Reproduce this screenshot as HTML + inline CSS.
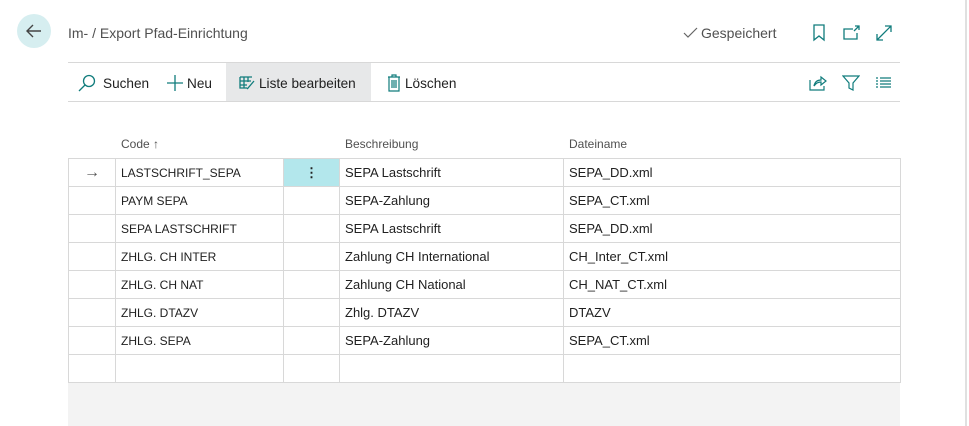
<!DOCTYPE html><html><head><style>
body{margin:0;width:969px;height:426px;background:#fff;font-family:"Liberation Sans",sans-serif;position:relative;overflow:hidden;color:#212121}
.a{position:absolute}
.t{font-size:13.6px}
table{border-collapse:collapse;position:absolute;left:68px;top:158px;font-size:13px}
td{border:1px solid #d8d8d8;height:28px;padding:0 0 0 5px;box-sizing:border-box}
</style></head><body>
<div class="a" style="left:17px;top:14px;width:34px;height:34px;border-radius:50%;background:#d6eef0"></div>
<svg class="a" style="left:24px;top:21px" width="20" height="20"><path d="M17 10H3M9 4L3 10L9 16" stroke="#444" stroke-width="1.4" fill="none"/></svg>
<div class="a" style="left:68px;top:25px;color:#505050;font-size:14px">Im- / Export Pfad-Einrichtung</div>
<svg class="a" style="left:683px;top:26px" width="16" height="14"><path d="M1 7L5 11L14 2" stroke="#666" stroke-width="1.2" fill="none"/></svg>
<div class="a" style="left:701px;top:25px;color:#505050;font-size:14px">Gespeichert</div>
<svg class="a" style="left:812px;top:24px" width="16" height="18" fill="none" stroke="#107c7c" stroke-width="1.3"><path d="M2 1H12V16L7 12L2 16Z"/></svg>
<svg class="a" style="left:843px;top:24px" width="18" height="18" fill="none" stroke="#107c7c" stroke-width="1.3"><path d="M10 5H1V15H14V9M12 2H16V6M16 2L11 7"/></svg>
<svg class="a" style="left:875px;top:24px" width="18" height="18" fill="none" stroke="#107c7c" stroke-width="1.3"><path d="M2 16L16 2M10 2H16V8M2 10V16H8"/></svg>
<div class="a" style="left:68px;top:62px;width:832px;height:1px;background:#d8d8d8"></div>
<div class="a" style="left:68px;top:101px;width:832px;height:1px;background:#d8d8d8"></div>
<div class="a" style="left:226px;top:63px;width:145px;height:38px;background:#e7e8e9"></div>
<svg class="a" style="left:78px;top:74px" width="18" height="18" fill="none" stroke="#107c7c" stroke-width="1.3"><circle cx="11" cy="7" r="5.5"/><path d="M7 11L1 17"/></svg>
<div class="a t" style="left:103px;top:76px">Suchen</div>
<svg class="a" style="left:166px;top:74px" width="18" height="18" stroke="#107c7c" stroke-width="1.3"><path d="M9 1V17M1 9H17"/></svg>
<div class="a t" style="left:187px;top:76px">Neu</div>
<svg class="a" style="left:239px;top:75px" width="16" height="15" fill="none" stroke="#107c7c" stroke-width="1.3"><path d="M1 2H13M1 2V13H8M1 6H12M1 10H8M5 2V13M9 2V7M15 6L9 13L8 14"/></svg>
<div class="a t" style="left:259px;top:76px">Liste bearbeiten</div>
<svg class="a" style="left:387px;top:74px" width="14" height="18" fill="none" stroke="#107c7c" stroke-width="1.2"><path d="M1 3H13M5 3V1H9V3M2 3V17H12V3M5 6V14M7 6V14M9 6V14"/></svg>
<div class="a t" style="left:405px;top:76px">Löschen</div>
<svg class="a" style="left:809px;top:74px" width="18" height="18" fill="none" stroke="#107c7c" stroke-width="1.2"><path d="M1 6V16H15V12M5 12C6 7 9 6 12 6V3L17 7L12 11V8C9 8 7 9 5 12Z"/></svg>
<svg class="a" style="left:842px;top:74px" width="18" height="18" fill="none" stroke="#107c7c" stroke-width="1.2"><path d="M1 2H17L11 9V16L7 14V9Z"/></svg>
<svg class="a" style="left:875px;top:76px" width="16" height="14" stroke="#107c7c" stroke-width="1.2"><path d="M1 2H3M5 2H16M1 5H3M5 5H16M1 8H3M5 8H16M1 11H3M5 11H16"/></svg>
<div class="a" style="left:121px;top:137px;font-size:12px;color:#505050">Code ↑</div>
<div class="a" style="left:345px;top:137px;font-size:12px;color:#505050">Beschreibung</div>
<div class="a" style="left:569px;top:137px;font-size:12px;color:#505050">Dateiname</div>
<table>
<tr><td style="width:47px;text-align:center;padding:0;color:#555;font-size:16px">→</td><td style="width:168px;font-size:12px">LASTSCHRIFT_SEPA</td><td style="width:56px;background:#b3e7ec;text-align:center;padding:0;font-weight:bold">⋮</td><td style="width:224px">SEPA Lastschrift</td><td style="width:337px">SEPA_DD.xml</td></tr>
<tr><td></td><td style="font-size:12px">PAYM SEPA</td><td></td><td>SEPA-Zahlung</td><td>SEPA_CT.xml</td></tr>
<tr><td></td><td style="font-size:12px">SEPA LASTSCHRIFT</td><td></td><td>SEPA Lastschrift</td><td>SEPA_DD.xml</td></tr>
<tr><td></td><td style="font-size:12px">ZHLG. CH INTER</td><td></td><td>Zahlung CH International</td><td>CH_Inter_CT.xml</td></tr>
<tr><td></td><td style="font-size:12px">ZHLG. CH NAT</td><td></td><td>Zahlung CH National</td><td>CH_NAT_CT.xml</td></tr>
<tr><td></td><td style="font-size:12px">ZHLG. DTAZV</td><td></td><td>Zhlg. DTAZV</td><td>DTAZV</td></tr>
<tr><td></td><td style="font-size:12px">ZHLG. SEPA</td><td></td><td>SEPA-Zahlung</td><td>SEPA_CT.xml</td></tr>
<tr><td></td><td></td><td></td><td></td><td></td></tr>
</table>
<div class="a" style="left:68px;top:383px;width:832px;height:43px;background:#f3f3f3"></div>
<div class="a" style="left:965px;top:0;width:2px;height:426px;background:#e0e0e0"></div>
</body></html>
